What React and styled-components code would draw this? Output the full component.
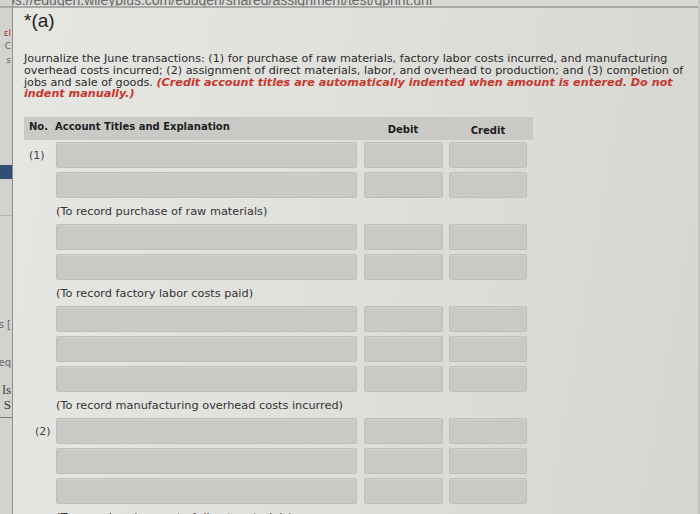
import React from "react";
import styled, { createGlobalStyle } from "styled-components";

const Global = createGlobalStyle`
  html, body { margin: 0; padding: 0; }
  body {
    width: 700px; height: 514px; overflow: hidden;
    background: #dcdcd8;
    font-family: "DejaVu Sans", Verdana, sans-serif;
  }
`;

const Page = styled.div`
  display: flex;
  width: 700px;
  height: 514px;
  overflow: hidden;
  background: linear-gradient(100deg, #e6e6e3 0%, #e0e0dc 45%, #d6d6d1 100%);
`;

const SideStrip = styled.div`
  width: 12px;
  flex: none;
  display: flex;
  flex-direction: column;
  align-items: flex-end;
  background: #d2d2ce;
  border-right: 1px solid #8e8e8a;
  overflow: hidden;
  font-size: 10px;
  color: #555;
`;

const StripBit = styled.div`
  flex: none;
  margin-top: ${(p) => p.$mt || 0}px;
  color: ${(p) => p.$color || "#666"};
  font-family: ${(p) => (p.$serif ? '"Liberation Serif", serif' : '"DejaVu Sans", sans-serif')};
  font-size: ${(p) => p.$size || 10}px;
  line-height: 1.15;
  padding-right: 1px;
  white-space: nowrap;
`;

const StripRule = styled.div`
  flex: none;
  align-self: stretch;
  margin-top: ${(p) => p.$mt || 0}px;
  height: ${(p) => p.$h || 1}px;
  background: ${(p) => p.$color || "#9a9a96"};
`;

const Main = styled.div`
  flex: 1;
  display: flex;
  flex-direction: column;
  min-width: 0;
  border-right: 2px solid #c4c4c0;
`;

const UrlBar = styled.div`
  flex: none;
  height: 6px;
  display: flex;
  align-items: flex-end;
  justify-content: flex-end;
  padding-right: 266px;
  overflow: hidden;
  border-bottom: 2px solid #a9a9a5;
  background: #d9d9d5;
`;

const UrlText = styled.span`
  flex: none;
  font-family: "Liberation Sans", Arial, sans-serif;
  font-size: 14px;
  line-height: 12px;
  color: #6a6a6a;
  white-space: nowrap;
`;

const Content = styled.div`
  flex: none;
  padding: 2px 0 0 11px;
  display: flex;
  flex-direction: column;
`;

const PartLabel = styled.div`
  font-family: "Liberation Sans", Arial, sans-serif;
  font-size: 19px;
  color: #222;
  line-height: 22px;
`;

const Instructions = styled.p`
  margin: 21px 0 0 0;
  font-size: 11.2px;
  line-height: 11.8px;
  color: #2b2b2b;
  white-space: nowrap;
`;

const Warn = styled.span`
  color: #c8372d;
  font-weight: bold;
  font-style: italic;
`;

const Table = styled.div`
  margin-top: 17px;
  width: 509px;
  display: flex;
  flex-direction: column;
`;

const Grid = styled.div`
  display: grid;
  grid-template-columns: 25.5px 301px 79px 78px;
  column-gap: 6.5px;
`;

const HeaderRow = styled(Grid)`
  background: #c9c9c5;
  height: 23px;
  align-items: center;
  margin-bottom: 2px;
`;

const HeadCell = styled.div`
  font-weight: bold;
  font-size: 10px;
  color: #1e1e1e;
  white-space: nowrap;
  padding-left: ${(p) => (p.$first ? 5 : 0)}px;
  text-align: ${(p) => (p.$center ? "center" : "left")};
  grid-column: ${(p) => p.$span || "auto"};
  transform: translateY(${(p) => p.$dy || 0}px);
`;

const EntryRow = styled(Grid)`
  height: 26px;
  margin-bottom: 4px;
  align-items: stretch;
`;

const No = styled.div`
  font-size: 11px;
  color: #444;
  padding-left: ${(p) => p.$pl || 5}px;
  display: flex;
  align-items: center;
`;

const Field = styled.div`
  background: #c9c9c5;
  border: 1px solid #bebeba;
  border-radius: 2px;
  box-shadow: inset 0 1px 0 rgba(255, 255, 255, 0.15);
`;

const Explanation = styled.div`
  height: 26px;
  display: flex;
  align-items: center;
  padding-left: 32px;
  margin-top: -4px;
  font-size: 11.3px;
  color: #333;
  white-space: nowrap;
`;

const groups = [
  { no: "(1)", rows: 2, text: "(To record purchase of raw materials)" },
  { no: "", rows: 2, text: "(To record factory labor costs paid)" },
  { no: "", rows: 3, text: "(To record manufacturing overhead costs incurred)" },
  { no: "(2)", rows: 3, text: "(To record assignment of direct materials)" },
];

export default function App() {
  return (
    <>
      <Global />
      <Page>
        <SideStrip>
          <StripRule $mt={6} $h={2} $color="#a9a9a5" />
          <StripBit $mt={20} $color="#b0302a" $size={9}>ɛl</StripBit>
          <StripBit $mt={3} $size={9}>C</StripBit>
          <StripBit $mt={3} $size={9}>s</StripBit>
          <StripRule $mt={100} $h={14} $color="#2f4f74" />
          <StripRule $mt={36} $color="#b5b5b1" />
          <StripBit $mt={103} $size={10}>s [</StripBit>
          <StripBit $mt={26} $size={10}>eq</StripBit>
          <StripBit $mt={15} $serif $size={13} $color="#333">ls</StripBit>
          <StripBit $serif $size={13} $color="#333">S</StripBit>
          <StripRule $mt={4} $color="#777" />
        </SideStrip>
        <Main>
          <UrlBar>
            <UrlText>https://edugen.wileyplus.com/edugen/shared/assignment/test/qprint.uni</UrlText>
          </UrlBar>
          <Content>
            <PartLabel>*(a)</PartLabel>
            <Instructions>
              Journalize the June transactions: (1) for purchase of raw materials, factory labor costs incurred, and manufacturing
              <br />
              overhead costs incurred; (2) assignment of direct materials, labor, and overhead to production; and (3) completion of
              <br />
              jobs and sale of goods.{" "}
              <Warn>(Credit account titles are automatically indented when amount is entered. Do not</Warn>
              <br />
              <Warn>indent manually.)</Warn>
            </Instructions>
            <Table>
              <HeaderRow>
                <HeadCell $first $span="1 / 3" $dy={-2}>No.&nbsp; Account Titles and Explanation</HeadCell>
                <HeadCell $center $dy={1}>Debit</HeadCell>
                <HeadCell $center $dy={2}>Credit</HeadCell>
              </HeaderRow>
              {groups.map((g, gi) => (
                <React.Fragment key={gi}>
                  {Array.from({ length: g.rows }).map((_, ri) => (
                    <EntryRow key={ri}>
                      <No $pl={gi === 3 ? 11 : 5}>{ri === 0 ? g.no : ""}</No>
                      <Field />
                      <Field />
                      <Field />
                    </EntryRow>
                  ))}
                  <Explanation>{g.text}</Explanation>
                </React.Fragment>
              ))}
            </Table>
          </Content>
        </Main>
      </Page>
    </>
  );
}
